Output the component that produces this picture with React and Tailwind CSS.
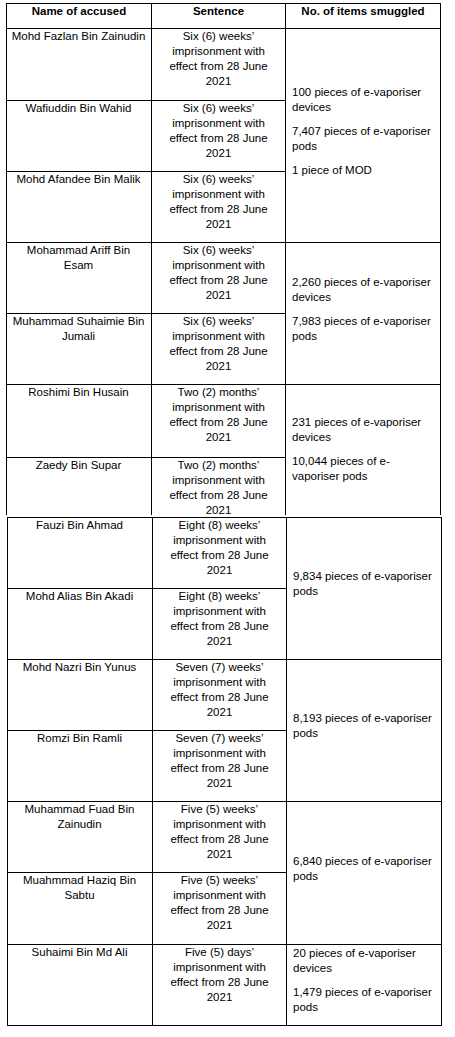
import React from 'react'

// rows of the first block (header + 7 accused), then the second block
const SIX = 'Six (6) weeks’ imprisonment with effect from 28 June 2021'
const TWO = 'Two (2) months’ imprisonment with effect from 28 June 2021'
const EIGHT = 'Eight (8) weeks’ imprisonment with effect from 28 June 2021'
const SEVEN = 'Seven (7) weeks’ imprisonment with effect from 28 June 2021'
const FIVE_W = 'Five (5) weeks’ imprisonment with effect from 28 June 2021'
const FIVE_D = 'Five (5) days’ imprisonment with effect from 28 June 2021'

const first = [
  {
    people: [
      ['Mohd Fazlan Bin Zainudin', SIX],
      ['Wafiuddin Bin Wahid', SIX],
      ['Mohd Afandee Bin Malik', SIX],
    ],
    items: ['100 pieces of e-vaporiser devices', '7,407 pieces of e-vaporiser pods', '1 piece of MOD'],
  },
  {
    people: [
      ['Mohammad Ariff Bin Esam', SIX],
      ['Muhammad Suhaimie Bin Jumali', SIX],
    ],
    items: ['2,260 pieces of e-vaporiser devices', '7,983 pieces of e-vaporiser pods'],
  },
  {
    people: [
      ['Roshimi Bin Husain', TWO],
      ['Zaedy Bin Supar', TWO],
    ],
    items: ['231 pieces of e-vaporiser devices', '10,044 pieces of e-vaporiser pods'],
    shift: true,
  },
]

const second = [
  {
    people: [
      ['Fauzi Bin Ahmad', EIGHT],
      ['Mohd Alias Bin Akadi', EIGHT],
    ],
    items: ['9,834 pieces of e-vaporiser pods'],
  },
  {
    people: [
      ['Mohd Nazri Bin Yunus', SEVEN],
      ['Romzi Bin Ramli', SEVEN],
    ],
    items: ['8,193 pieces of e-vaporiser pods'],
  },
  {
    people: [
      ['Muhammad Fuad Bin Zainudin', FIVE_W],
      ['Muahmmad Haziq Bin Sabtu', FIVE_W],
    ],
    items: ['6,840 pieces of e-vaporiser pods'],
  },
  {
    people: [['Suhaimi Bin Md Ali', FIVE_D]],
    items: ['20 pieces of e-vaporiser devices', '1,479 pieces of e-vaporiser pods'],
  },
]

const spanClass = { 1: 'row-span-1', 2: 'row-span-2', 3: 'row-span-3' }

function Group({ group }) {
  const n = group.people.length
  return (
    <>
      {group.people.map(([name, sentence], i) => (
        <React.Fragment key={name}>
          <div className="bg-white pl-[4px] pr-[5px] text-center">{name}</div>
          <div className="bg-white px-[8px] text-center">{sentence}</div>
          {i === 0 && (
            <div
              className={`${spanClass[n]} bg-white pl-[6px] pr-[6px] flex flex-col justify-center ${
                group.shift ? 'pt-[8px]' : ''
              }`}
            >
              {group.items.map((t) => (
                <p key={t} className="mb-[9px]">
                  {t}
                </p>
              ))}
            </div>
          )}
        </React.Fragment>
      ))}
    </>
  )
}

export default function App() {
  return (
    <div className="min-h-screen bg-white text-black text-[11.5px] leading-[15px] font-['Liberation_Sans',Arial,sans-serif]">
      {/* first block, cut off at the bottom */}
      <div className="pt-[3px] pl-[6px]">
        <div className="grid w-fit grid-cols-[144px_133px_154px] grid-rows-[24px_71px_70px_70px_70px_70px_72px_57px] gap-px bg-black border border-b-0 border-black">
          <div className="bg-white text-center font-bold">Name of accused</div>
          <div className="bg-white text-center font-bold">Sentence</div>
          <div className="bg-white text-center font-bold">No. of items smuggled</div>
          {first.map((g, i) => (
            <Group key={i} group={g} />
          ))}
        </div>
      </div>

      {/* second block */}
      <div className="pt-[2px] pl-[7px]">
        <div className="grid w-fit grid-cols-[144px_133px_154px] grid-rows-[70px_70px_70px_70px_70px_71px_80px] gap-px bg-black border border-black">
          {second.map((g, i) => (
            <Group key={i} group={g} />
          ))}
        </div>
      </div>
    </div>
  )
}
